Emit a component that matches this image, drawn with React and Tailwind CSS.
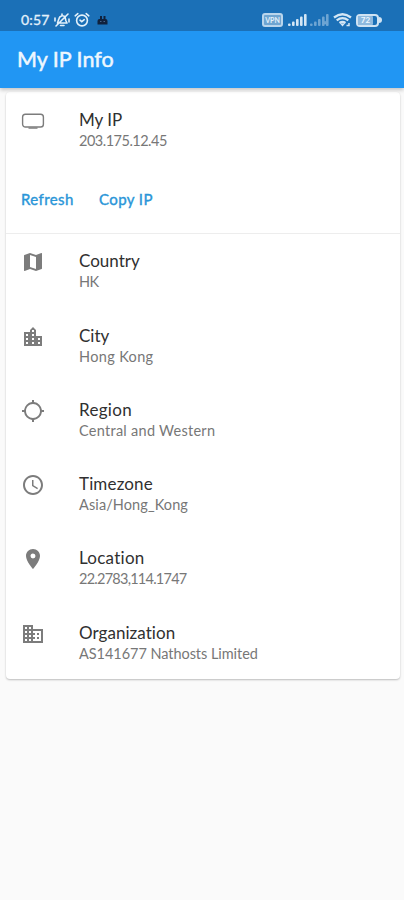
import React from 'react';
import { MdMap, MdLocationCity, MdLocationSearching, MdAccessTime, MdLocationOn, MdBusiness } from 'react-icons/md';

const TvIcon = ({ className }) => (
  <svg className={className} width="24" height="24" viewBox="0 0 24 24" fill="none" stroke="currentColor">
    <rect x="1.6" y="5.2" width="20.8" height="12.8" rx="2.8" strokeWidth="1.4" />
    <path d="M7.5 19.1h9" strokeWidth="1.3" />
  </svg>
);

const rows = [
  { icon: MdMap, title: 'Country', value: 'HK', titleClass: '', valueClass: 'tracking-[-0.5px]' },
  { icon: MdLocationCity, title: 'City', value: 'Hong Kong', titleClass: '', valueClass: 'tracking-[0.35px]' },
  { icon: MdLocationSearching, title: 'Region', value: 'Central and Western', titleClass: 'tracking-[0.3px]', valueClass: 'tracking-[0.27px]' },
  { icon: MdAccessTime, title: 'Timezone', value: 'Asia/Hong_Kong', titleClass: 'tracking-[0.15px]', valueClass: 'tracking-[0.1px]' },
  { icon: MdLocationOn, title: 'Location', value: '22.2783,114.1747', titleClass: 'tracking-[0.25px]', valueClass: 'tracking-[-0.75px]' },
  { icon: MdBusiness, title: 'Organization', value: 'AS141677 Nathosts Limited', titleClass: 'tracking-[0.05px]', valueClass: 'tracking-[-0.05px]' },
];

const Signal = ({ off }) => (
  <svg width="19" height="12" viewBox="0 0 19 12" fill="#d3e6f5" opacity={off ? 0.45 : 1}>
    <rect x="0" y="9.5" width="2.6" height="2.5" rx="1" />
    <rect x="4" y="7.5" width="2.6" height="4.5" rx="1" />
    <rect x="8" y="5" width="2.6" height="7" rx="1" />
    <rect x="12" y="2.5" width="2.6" height="9.5" rx="1" />
    <rect x="16" y="0" width="2.6" height="12" rx="1" />
    {off && <path d="M12.5 6l5 5.5M17.5 6l-5 5.5" stroke="#d3e6f5" strokeWidth="1.3" />}
  </svg>
);

const StatusBar = () => (
  <div className="h-[31px] bg-[#1b70b7] pt-[9px] pl-[21px] pr-[22px] flex items-center text-[#e3f1fb]">
    <span className="w-[30px] text-[14px] leading-5 tracking-[0.2px] whitespace-nowrap [-webkit-text-stroke:0.3px]">0:57</span>

    {/* Muted bell */}
    <svg className="ml-[2px]" width="18" height="16" viewBox="0 0 18 16" fill="none" stroke="currentColor" strokeWidth="1.6" strokeLinecap="round" strokeLinejoin="round">
      <path d="M4.5 11L6 6.5a3.5 3.5 0 0 1 6-1.500l.8 3.500 1.200 2.500h-9.500M7.500 13.500h3.500M9 2v1.500M3 14L15 2M2 6v3M16 7v3" />
    </svg>

    {/* Alarm */}
    <svg className="ml-[3px]" width="16" height="16" viewBox="0 0 16 16" fill="none" stroke="currentColor" strokeWidth="1.6" strokeLinecap="round">
      <circle cx="8" cy="8.5" r="5.4" />
      <path d="M1.2 3.8l2.600-2.200M14.800 3.800l-2.600-2.200M6 8.200l1.800 1.500 2.400-2" />
    </svg>

    {/* App notification */}
    <svg className="ml-[7px]" width="11" height="10" viewBox="0 0 11 10" fill="#10213d">
      <path d="M.5 9.500V6Q.5 4 2.500 4H8.500Q10.500 4 10.500 6V9.500ZM3 1h2v3H3ZM6.500 1h2v3h-2Z" />
      <path d="M3 6.500h1.500M6.500 6.500H8" stroke="#46658a" />
    </svg>

    <div className="ml-auto flex items-center">
      <div className="w-[21px] h-[14px] rounded-[3px] border-2 border-[#b9d5ec] bg-[#6fa5d1] text-[#e3f1fb] text-[7px] leading-[10px] font-bold text-center">VPN</div>
      <div className="ml-[5px] flex gap-[3px]">
        <Signal />
        <Signal off />
      </div>
      <svg className="ml-[4px]" width="19" height="14" viewBox="0 0 19 14" fill="none" stroke="#d3e6f5" strokeWidth="2.3">
        <path d="M1 4.500Q9.500-2 18 4.500M3.700 7.300Q9.500 3 15.300 7.300M6.500 10Q9.500 8 12.500 10" />
        <path d="M9.500 13.500l-2.500-3h5Z" fill="#d3e6f5" stroke="none" />
        <path d="M13.500 12.500h2.500v-2.500" strokeWidth="1.500" />
      </svg>
      <div className="ml-[4px] w-[23px] h-[13px] rounded-[4px] border-2 border-[#cfe3f3] flex">
        <div className="w-[15px] h-full rounded-[1px] bg-[#8db9de] text-[#eef7fe] text-[8px] leading-[9px] font-bold text-center">72</div>
      </div>
      <div className="w-[3px] h-[6px] rounded-r-full bg-[#cfe3f3]" />
    </div>
  </div>
);

const Item = ({ icon: Icon, title, value, titleClass, valueClass }) => (
  <div className="h-[74.3px] pl-[15px] pt-4 flex">
    <Icon size={24} className="text-[#7c7c7c] shrink-0" />
    <div className="ml-[34px] whitespace-nowrap">
      <p className={`text-[17px] leading-[22px] text-[#303030] ${titleClass}`}>{title}</p>
      <p className={`text-[14.5px] leading-[20px] text-[#777777] ${valueClass}`}>{value}</p>
    </div>
  </div>
);

const App = () => {
  return (
    <div className="w-[404px] h-[900px] overflow-hidden bg-[#fafafa] font-['Lato',sans-serif]">
      <header className="relative shadow-[0_2px_4px_rgba(0,0,0,0.22)]">
        <StatusBar />
        <div className="h-[57px] bg-[#2196f3] pl-[17px] flex items-center">
          <h1 className="text-[21.5px] text-[#eef7fe] [-webkit-text-stroke:0.5px]">My IP Info</h1>
        </div>
      </header>

      <main className="mt-[4px] ml-[6px] mr-[4px] h-[587px] bg-white rounded-[4px] shadow-[0_1px_2px_rgba(0,0,0,0.25)]">
        <div className="pt-px">
          <Item icon={TvIcon} title="My IP" value="203.175.12.45" titleClass="" valueClass="tracking-[-0.5px]" />
        </div>

        {/* Actions */}
        <div className="h-[66px] pl-[15px] pt-[22px] flex gap-[26px] text-[15px] leading-[20px] text-[#2a96d8] whitespace-nowrap [-webkit-text-stroke:0.4px]">
          <button className="w-[52px] h-5 text-left tracking-[0.4px]">Refresh</button>
          <button className="w-[54px] h-5 text-left tracking-[0.4px]">Copy IP</button>
        </div>

        <div className="border-t border-[#ededed]">
          {rows.map((row) => (
            <Item key={row.title} {...row} />
          ))}
        </div>
      </main>
    </div>
  );
};

export default App;
